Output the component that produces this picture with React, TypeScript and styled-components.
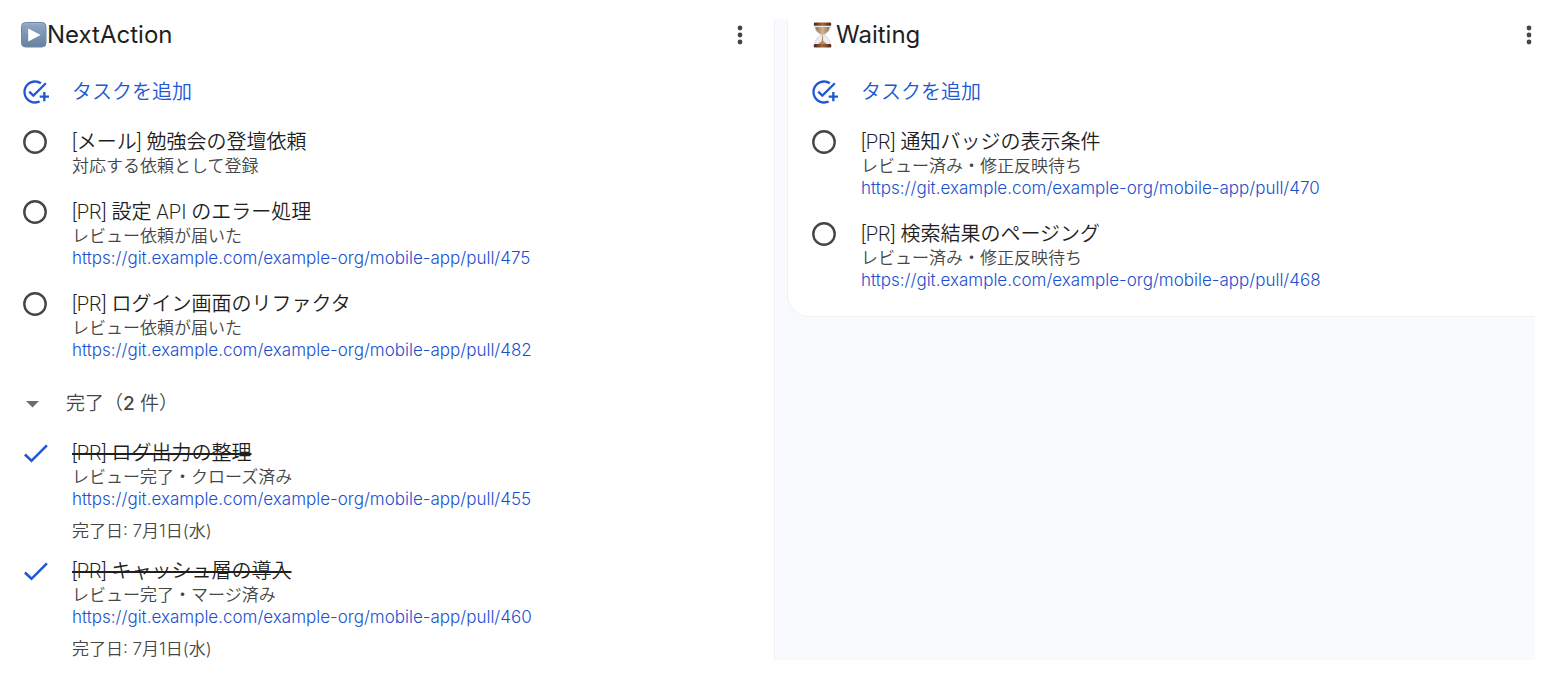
import React from "react";
import styled, { createGlobalStyle } from "styled-components";

const GlobalStyle = createGlobalStyle`
  *, *::before, *::after { box-sizing: border-box; }
  body {
    margin: 0;
    background: #fff;
    color: #1f1f1f;
    font-family: Roboto, "Noto Sans CJK JP", sans-serif;
    font-weight: 350;
  }
`;

const Board = styled.main`
  display: grid;
  grid-template-columns: 775fr 748fr;
  column-gap: 12px;
  align-items: start;
  min-height: calc(100vh - 39px);
  margin: 19px 19px 20px 0;
  background: #f8fafd;
`;

const Column = styled.section<{ $last?: boolean }>`
  align-self: ${(p) => (p.$last ? "start" : "stretch")};
  padding: ${(p) => (p.$last ? "0 0 13px 22px" : "0 28px 0 21px")};
  background: #fff;
  border: 0 solid #eff1f4;
  border-width: ${(p) => (p.$last ? "0 0 1px 1px" : "0 1px 0 0")};
  border-bottom-left-radius: ${(p) => (p.$last ? "22px" : "0")};
`;

const Header = styled.header`
  display: flex;
  align-items: center;
  justify-content: space-between;
  height: 32px;
  margin-bottom: 14px;
`;

const Heading = styled.h2`
  display: flex;
  align-items: center;
  margin: 0;
  font-family: Inter, "Noto Sans CJK JP", sans-serif;
  font-size: 24px;
  font-weight: 400;
  line-height: 32px;
`;

const MenuButton = styled.button`
  display: grid;
  place-items: center;
  width: 12px;
  height: 32px;
  padding: 0;
  border: 0;
  background: none;
  color: #444746;
`;

const AddButton = styled.button`
  display: flex;
  align-items: center;
  gap: 23px;
  width: 100%;
  height: 54px;
  padding: 0;
  border: 0;
  background: none;
  color: #2158d2;
  font: inherit;
  font-size: 20px;
  line-height: 26px;
  text-align: left;
`;

const List = styled.ul`
  margin: 0;
  padding: 0;
  list-style: none;
`;

const Row = styled.li<{ $done?: boolean }>`
  display: flex;
  gap: 23px;
  padding: 10px 0 ${(p) => (p.$done ? "6px" : "12px")};

  &:last-child {
    padding-bottom: ${(p) => (p.$done ? "0" : "12px")};
  }
`;

const Tick = styled.span`
  position: relative;
  display: grid;
  place-content: center;
  flex: none;
  width: 28px;
  height: 26px;
`;

const TickInput = styled.input`
  position: absolute;
  inset: 0;
  width: 100%;
  height: 100%;
  margin: 0;
  opacity: 0;
`;

const Body = styled.div`
  display: flex;
  flex-direction: column;
  align-items: flex-start;
  min-width: 0;
  font-family: Inter, "Noto Sans CJK JP", sans-serif;
  font-size: 17px;
  line-height: 22px;
  color: #444746;
`;

const Title = styled.label<{ $done?: boolean }>`
  font-family: Roboto, "Noto Sans CJK JP", sans-serif;
  font-size: 20px;
  line-height: 26px;
  color: #1f1f1f;
  text-decoration: ${(p) => (p.$done ? "line-through" : "none")};
`;

const TaskLink = styled.a`
  color: #1a50d0;
  text-decoration: none;
`;

const DoneDate = styled.span`
  margin-top: 10px;
`;

const DoneToggle = styled.button`
  display: flex;
  align-items: center;
  gap: 21px;
  width: 100%;
  height: 53px;
  margin: 4px 0 0;
  padding: 0;
  border: 0;
  background: none;
  color: #444746;
  font-family: Inter, "Noto Sans CJK JP", sans-serif;
  font-size: 19px;
  font-weight: 350;
  line-height: 26px;
  text-align: left;
`;

const Count = styled.span`
  font-weight: 500;
`;

const PlayEmoji = () => (
  <svg width="26" height="26" viewBox="0 0 26 26" aria-hidden="true">
    <defs>
      <linearGradient id="play" x1="0" y1="0" x2="0" y2="1">
        <stop offset="0" stopColor="#a3b9d3" />
        <stop offset="0.120" stopColor="#8aa3c2" />
        <stop offset="1" stopColor="#68819f" />
      </linearGradient>
    </defs>
    <rect x="0.5" y="0.5" width="24.500" height="24.500" rx="4" fill="url(#play)" stroke="#6f88a6" />
    <path d="M7.2 6.600 19.700 13 7.200 19.600z" fill="#fff" />
  </svg>
);

const HourglassEmoji = () => (
  <svg width="26" height="26" viewBox="0 0 26 26" aria-hidden="true">
    <defs>
      <linearGradient id="wood" x1="0" x2="1">
        <stop offset="0" stopColor="#4e2415" />
        <stop offset="0.500" stopColor="#a5673f" />
        <stop offset="1" stopColor="#4e2415" />
      </linearGradient>
      <linearGradient id="sand" x1="0" x2="1">
        <stop offset="0" stopColor="#8d7358" />
        <stop offset="0.500" stopColor="#d3b48c" />
        <stop offset="1" stopColor="#8d7358" />
      </linearGradient>
    </defs>
    <path d="M4.800 3h15.400c0 5.500-2.200 7.500-6.200 10 4 2.500 6.200 4.500 6.200 10H4.800c0-5.500 2.200-7.500 6.200-10-4-2.500-6.200-4.500-6.200-10z" fill="#e9edf2" stroke="#c3c9d0" strokeWidth="0.6" />
    <path d="M5.400 5h14.200c-.4 4-2.800 5.800-7.100 8-4.300-2.200-6.700-4-7.100-8z" fill="url(#sand)" />
    <path d="M12.200 13h.6l.4 6 4.200 3.500h-9.800l4.200-3.500z" fill="#b98a55" />
    <rect x="3.800" y="0.600" width="17.400" height="3.200" rx="1.300" fill="url(#wood)" />
    <rect x="3.800" y="22" width="17.400" height="3.600" rx="1.300" fill="url(#wood)" />
  </svg>
);

const MoreIcon = () => (
  <svg width="6" height="20" viewBox="0 0 6 20" fill="currentColor" aria-hidden="true">
    <circle cx="3" cy="3" r="2.400" />
    <circle cx="3" cy="10" r="2.400" />
    <circle cx="3" cy="17" r="2.400" />
  </svg>
);

const AddTaskIcon = () => (
  <svg width="28" height="28" viewBox="0 0 24 24" fill="currentColor" aria-hidden="true">
    <path d="M22 5.180 10.590 16.600l-4.240-4.240 1.410-1.410 2.830 2.830 10-10L22 5.180zM12 20c-4.420 0-8-3.580-8-8s3.580-8 8-8c1.580 0 3.040.46 4.280 1.250l1.440-1.440C16.100 2.670 14.130 2 12 2 6.480 2 2 6.480 2 12s4.480 10 10 10c1.730 0 3.360-.44 4.780-1.220l-1.500-1.500c-1 .46-2.110.72-3.280.72zm7-5h-3v2h3v3h2v-3h3v-2h-3v-3h-2v3z" />
  </svg>
);

const CircleIcon = () => (
  <svg width="28" height="28" viewBox="0 0 28 28" aria-hidden="true">
    <circle cx="14" cy="14" r="10.700" fill="none" stroke="#444746" strokeWidth="2.400" />
  </svg>
);

const CheckIcon = () => (
  <svg width="28" height="28" viewBox="0 0 28 28" aria-hidden="true">
    <path d="M3.900 15.500 10.500 21.800 25.900 6.400" fill="none" stroke="#2158d2" strokeWidth="2.600" />
  </svg>
);

const CaretIcon = () => (
  <svg width="24" height="24" viewBox="0 0 24 24" aria-hidden="true">
    <path d="M5 9h13l-6.500 6.500z" fill="#6b6e70" />
  </svg>
);

type Task = { id: string; title: string; note: string; pull?: number; date?: string };

const next: Task[] = [
  { id: "n1", title: "[メール] 勉強会の登壇依頼", note: "対応する依頼として登録" },
  { id: "n2", title: "[PR] 設定 API のエラー処理", note: "レビュー依頼が届いた", pull: 475 },
  { id: "n3", title: "[PR] ログイン画面のリファクタ", note: "レビュー依頼が届いた", pull: 482 },
];

const finished: Task[] = [
  { id: "d1", title: "[PR] ログ出力の整理", note: "レビュー完了・クローズ済み", pull: 455, date: "7月1日(水)" },
  { id: "d2", title: "[PR] キャッシュ層の導入", note: "レビュー完了・マージ済み", pull: 460, date: "7月1日(水)" },
];

const waiting: Task[] = [
  { id: "w1", title: "[PR] 通知バッジの表示条件", note: "レビュー済み・修正反映待ち", pull: 470 },
  { id: "w2", title: "[PR] 検索結果のページング", note: "レビュー済み・修正反映待ち", pull: 468 },
];

const TaskRow = ({ task }: { task: Task }) => {
  const done = Boolean(task.date);
  const url = `https://git.example.com/example-org/mobile-app/pull/${task.pull}`;
  return (
    <Row $done={done}>
      <Tick>
        {done ? <CheckIcon /> : <CircleIcon />}
        <TickInput type="checkbox" id={task.id} defaultChecked={done} />
      </Tick>
      <Body>
        <Title htmlFor={task.id} $done={done}>{task.title}</Title>
        <span>{task.note}</span>
        {task.pull && <TaskLink href={url}>{url}</TaskLink>}
        {task.date && <DoneDate>完了日: {task.date}</DoneDate>}
      </Body>
    </Row>
  );
};

const ColumnTop = ({ icon, name }: { icon: React.ReactNode; name: string }) => (
  <>
    <Header>
      <Heading>{icon}{name}</Heading>
      <MenuButton type="button" aria-label={`${name} menu`}><MoreIcon /></MenuButton>
    </Header>
    <AddButton type="button"><AddTaskIcon />タスクを追加</AddButton>
  </>
);

export default function App() {
  return (
    <>
      <GlobalStyle />
      <Board>
        <Column>
          <ColumnTop icon={<PlayEmoji />} name="NextAction" />
          <List>{next.map((t) => <TaskRow key={t.id} task={t} />)}</List>
          <DoneToggle type="button" aria-expanded="true">
            <CaretIcon />
            <span>完了（<Count>2</Count> 件）</span>
          </DoneToggle>
          <List>{finished.map((t) => <TaskRow key={t.id} task={t} />)}</List>
        </Column>
        <Column $last>
          <ColumnTop icon={<HourglassEmoji />} name="Waiting" />
          <List>{waiting.map((t) => <TaskRow key={t.id} task={t} />)}</List>
        </Column>
      </Board>
    </>
  );
}
